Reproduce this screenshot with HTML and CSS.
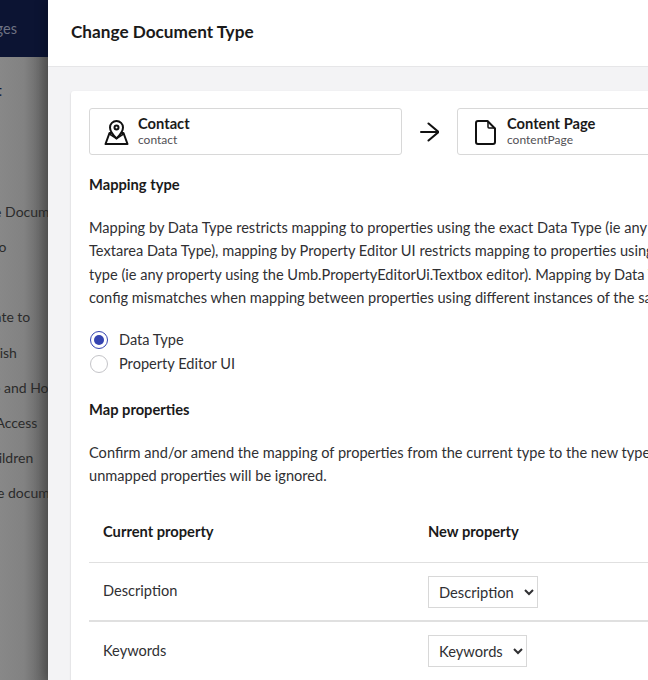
FILE: index.html
```html
<!DOCTYPE html>
<html lang="en">
<head>
<meta charset="utf-8">
<title>Change Document Type</title>
<link rel="stylesheet" href="styles.css">
</head>
<body>
<div class="app">
  <aside class="side">
    <div class="side-top"><span class="side-top-label">Languages</span></div>
    <div class="side-body">
      <div class="side-title">Content</div>
      <ul class="side-menu">
        <li>Create</li>
        <li>Delete</li>
        <li>Change Document Type</li>
        <li>Move to</li>
        <li>Copy</li>
        <li>Duplicate to</li>
        <li>Unpublish</li>
        <li>Culture and Hostnames</li>
        <li>Public Access</li>
        <li>Sort children</li>
        <li>Remove document</li>
      </ul>
    </div>
  </aside>
  <main class="modal">
    <header class="modal-head"><h1>Change Document Type</h1></header>
    <div class="modal-body">
      <section class="card">
        <div class="types">
          <div class="type-box">
            <svg class="type-icon" viewBox="0 0 26 26" fill="none" stroke="currentColor" stroke-width="2" stroke-linecap="round" stroke-linejoin="round">
              <path d="M12.500 19.500C9 16 6 12.500 6 8.500a6.500 6.500 0 0 1 13 0c0 4-3 7.500-6.500 11z"/>
              <circle cx="12.500" cy="8.500" r="2"/>
              <path d="M7 14H5.500L1.500 25h22l-4-11H18"/>
              <path d="M5.500 15l7 4.500 7-4.500" stroke-width="1.500"/>
            </svg>
            <div class="type-text"><div class="type-name">Contact</div><div class="type-alias">contact</div></div>
          </div>
          <svg class="arrow" viewBox="0 0 20 20" fill="none" stroke="currentColor" stroke-width="2" stroke-linecap="round" stroke-linejoin="round">
            <path d="M2 10h17.500M9.500 1.500l10 8.500-10 8.500"/>
          </svg>
          <div class="type-box next">
            <svg class="type-icon" viewBox="0 0 26 26" fill="none" stroke="currentColor" stroke-width="2" stroke-linecap="round" stroke-linejoin="round">
              <path d="M3 4a2 2 0 0 1 2-2h9.500l7.500 7.500V23a2 2 0 0 1-2 2H5a2 2 0 0 1-2-2z"/>
              <path d="M15 2.500V8a1 1 0 0 0 1 1h5.500" stroke-width="1.500"/>
            </svg>
            <div class="type-text"><div class="type-name">Content Page</div><div class="type-alias">contentPage</div></div>
          </div>
        </div>

        <h2 class="section-title first">Mapping type</h2>
        <p class="copy">Mapping by Data Type restricts mapping to properties using the exact Data Type (ie any property using the<br>Textarea Data Type), mapping by Property Editor UI restricts mapping to properties using the same property editor<br>type (ie any property using the Umb.PropertyEditorUi.Textbox editor). Mapping by Data Type avoids property editor<br>config mismatches when mapping between properties using different instances of the same property editor.</p>

        <div class="radios">
          <label class="radio"><span class="radio-mark on"></span>Data Type</label>
          <label class="radio"><span class="radio-mark"></span>Property Editor UI</label>
        </div>

        <h2 class="section-title">Map properties</h2>
        <p class="copy">Confirm and/or amend the mapping of properties from the current type to the new type where necessary. Any<br>unmapped properties will be ignored.</p>

        <table class="map">
          <thead><tr><th>Current property</th><th>New property</th></tr></thead>
          <tbody>
            <tr><td>Description</td><td><select class="pick"><option>Description</option></select></td></tr>
            <tr><td>Keywords</td><td><select class="pick"><option>Keywords</option></select></td></tr>
          </tbody>
        </table>
      </section>
    </div>
  </main>
</div>
</body>
</html>
```
FILE: styles.css
```css
* { box-sizing: border-box; }
html, body { margin: 0; height: 100%; overflow: hidden; }
body { font-family: Lato, "Open Sans", sans-serif; color: #1b264f; background: #fff; }

.app { display: flex; width: 648px; height: 680px; overflow: hidden; }

.side { flex: 0 0 48px; width: 48px; overflow: hidden; display: flex; flex-direction: column; background: linear-gradient(90deg, #888 0, #828282 50%, #5f5f5f 100%); }
.side-top { flex: 0 0 57px; background: #0c1433; display: flex; align-items: center; }
.side-top-label { margin-left: -50px; font-size: 14.5px; color: #6f7384; white-space: nowrap; }
.side-body { width: 300px; margin-left: -56px; color: #2b2b2b; white-space: nowrap; }
.side-title { margin-top: 23px; height: 20px; line-height: 20px; font-size: 16px; font-weight: 700; color: #10183a; }
.side-menu { list-style: none; margin: 32px 0 0 11px; padding: 0; font-size: 14px; }
.side-menu li { height: 35.1px; line-height: 20px; }

.modal { flex: 0 0 800px; width: 800px; display: flex; flex-direction: column; background: #f3f3f5; box-shadow: -4px 0 10px rgba(0,0,0,.2); }
.modal-head { flex: 0 0 67px; background: #fff; border-bottom: 1px solid #e6e6e8; display: flex; align-items: center; padding: 0 23px 3px; }
.modal-head h1 { margin: 0; font-size: 17.2px; font-weight: 700; color: #1a1a1a; }
.modal-body { padding: 24px 23px; }

.card { background: #fff; border-radius: 3px; box-shadow: 0 1px 2px rgba(0,0,0,.2); padding: 17px 18px; height: 700px; }

.types { display: flex; align-items: center; }
.type-box { flex: 0 0 313px; height: 47px; display: flex; align-items: center; padding: 0 14px; background: #fff; border: 1px solid #d8d8d8; border-radius: 3px; color: #111; }
.type-box.next { padding-left: 15px; }
.type-icon { width: 26px; height: 26px; flex: none; }
.type-text { margin-left: 8px; }
.type-name { font-size: 14.7px; line-height: 17px; font-weight: 700; color: #1a1a1a; }
.type-alias { font-size: 12px; line-height: 16px; color: #515054; }
.arrow { flex: none; width: 20px; height: 20px; margin: 0 18px 0 17px; color: #111; }

.section-title { margin: 0; font-size: 14.7px; line-height: 20px; font-weight: 700; color: #1a1a1a; }
.section-title.first { margin-top: 19px; }
.copy { margin: 22px 0 0; width: 700px; font-size: 14.6px; line-height: 23.4px; color: #303033; white-space: nowrap; }

.radios { margin-top: 18px; display: flex; flex-direction: column; }
.radio { display: flex; align-items: center; height: 24px; font-size: 14.6px; color: #303033; }
.radio-mark { width: 18px; height: 18px; margin: 0 11px 0 1px; border-radius: 50%; border: 1px solid #c4c4c8; background: #fff; display: flex; align-items: center; justify-content: center; }
.radio-mark.on { border-color: #3544b1; }
.radio-mark.on::after { content: ""; width: 10px; height: 10px; border-radius: 50%; background: #3544b1; }

.radios + .section-title { margin-top: 23px; }

.map { margin-top: 14px; width: 700px; border-collapse: collapse; table-layout: fixed; }
.map th { height: 61px; padding: 0 14px 2px; text-align: left; font-size: 14.7px; font-weight: 700; color: #1a1a1a; }
.map th:first-child, .map td:first-child { width: 325px; }
.map td { height: 59px; padding: 0 14px; border-top: 1px solid #e0e0e0; font-size: 14.6px; color: #303033; }
.map td:first-child { padding-bottom: 2px; }
.map tbody tr:nth-child(2) td { border-top-width: 2px; height: 59px; }
.pick { height: 32px; padding: 0 7px 0 6px; font-family: Lato, sans-serif; font-size: 14.7px; color: #303033; background: #fff; border: 1px solid #d8d8d8; border-radius: 0; display: block; }
```
